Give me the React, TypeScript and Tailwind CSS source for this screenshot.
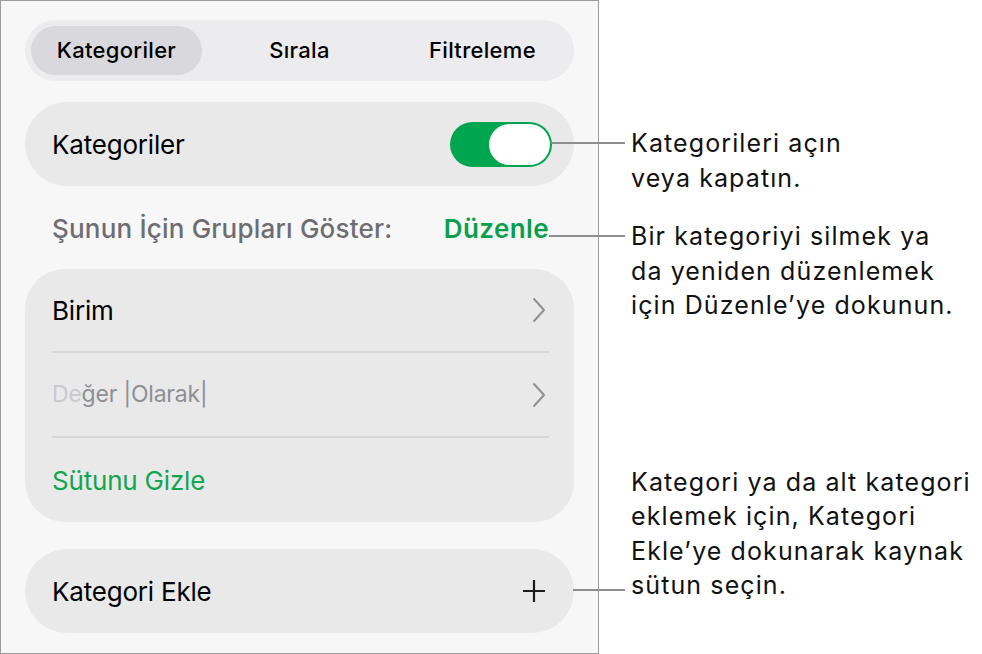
import { useState } from "react";

const font = { fontFamily: "Inter, 'Noto Sans', 'Liberation Sans', sans-serif" };

const tabs = ["Kategoriler", "Sırala", "Filtreleme"];

const Chevron = () => (
  <svg width="14" height="26" viewBox="0 0 14 26" fill="none" className="mr-[3px]">
    <polyline
      points="2,2 12,13 2,24"
      stroke="#8e8e93"
      strokeWidth="2"
      strokeLinecap="round"
      strokeLinejoin="round"
    />
  </svg>
);

const Plus = () => (
  <svg width="24" height="24" viewBox="0 0 24 24" fill="none">
    <path d="M12 1v22M1 12h22" stroke="#1c1c1e" strokeWidth="2.2" />
  </svg>
);

const Leader = ({ top, left }: { top: number; left: number }) => (
  <div
    className="absolute h-[2px] bg-[#8e8e8e]"
    style={{ top, left, width: 625 - left }}
  />
);

const App = () => {
  const [active, setActive] = useState(0);
  const [enabled, setEnabled] = useState(true);

  return (
    <div
      className="relative flex w-[982px] h-[654px] bg-white text-black overflow-hidden"
      style={font}
    >
      {/* settings panel */}
      <div className="w-[599px] h-[654px] shrink-0 border border-[#9c9c9c] bg-[#f7f7f7] pl-[24px] pr-[24px] pt-[19px]">
        <div className="grid grid-cols-3 items-center h-[61px] rounded-full bg-[#ececee]">
          {tabs.map((t, i) => (
            <button
              key={t}
              onClick={() => setActive(i)}
              className={`h-[49px] mx-[6px] rounded-full text-[22px] font-medium tracking-[0.3px] ${
                i === active ? "bg-[#d9d9dd]" : ""
              }`}
            >
              {t}
            </button>
          ))}
        </div>

        <div className="mt-[21px] flex items-center justify-between h-[84px] rounded-full bg-[#e9e9ea] pl-[27px] pr-[22px]">
          <span className="text-[26px] tracking-[-0.2px]">Kategoriler</span>
          <button
            onClick={() => setEnabled(!enabled)}
            className={`flex items-center w-[102px] h-[45px] rounded-full p-[2px] ${
              enabled ? "bg-[#00a54f] justify-end" : "bg-[#cfcfd3] justify-start"
            }`}
          >
            <span className="block w-[61px] h-[41px] rounded-full bg-white" />
          </button>
        </div>

        <div className="flex items-center justify-between h-[83px] pl-[27px] pr-[25px] pt-[2px]">
          <span className="text-[26px] font-medium text-[#6d6d72] tracking-[0.2px]">
            Şunun İçin Grupları Göster:
          </span>
          <span className="text-[26px] font-semibold text-[#0a9f4a] tracking-[0.4px]">
            Düzenle
          </span>
        </div>

        <div className="rounded-[40px] bg-[#e9e9ea] pl-[27px] pr-[25px]">
          <div className="flex items-center justify-between h-[84px] border-b-2 border-[#d6d6d8]">
            <span className="text-[26px] tracking-[-0.2px]">Birim</span>
            <Chevron />
          </div>
          <div className="flex items-center justify-between h-[85px] border-b-2 border-[#d6d6d8]">
            <span className="text-[23px] text-[#8e8e93] tracking-[-0.2px]">
              <span className="text-[#c9c9ce]">De</span>ğer |Olarak|
            </span>
            <Chevron />
          </div>
          <div className="flex items-center h-[84px]">
            <span className="text-[26px] text-[#12a54f] tracking-[-0.2px]">Sütunu Gizle</span>
          </div>
        </div>

        <div className="mt-[27px] flex items-center justify-between h-[84px] rounded-full bg-[#e9e9ea] pl-[27px] pr-[28px]">
          <span className="text-[26px] tracking-[-0.2px]">Kategori Ekle</span>
          <Plus />
        </div>
      </div>

      {/* callouts */}
      <div className="flex flex-col pl-[32px] pt-[126px] text-[25px] leading-[34.5px] tracking-[1.1px] text-[#111]">
        <p>
          Kategorileri açın
          <br />
          veya kapatın.
        </p>
        <p className="mt-[24px]">
          Bir kategoriyi silmek ya
          <br />
          da yeniden düzenlemek
          <br />
          için Düzenle’ye dokunun.
        </p>
        <p className="mt-[142px]">
          Kategori ya da alt kategori
          <br />
          eklemek için, Kategori
          <br />
          Ekle’ye dokunarak kaynak
          <br />
          sütun seçin.
        </p>
      </div>

      <Leader top={142} left={551} />
      <Leader top={235} left={549} />
      <Leader top={589} left={573} />
    </div>
  );
};

export default App;
